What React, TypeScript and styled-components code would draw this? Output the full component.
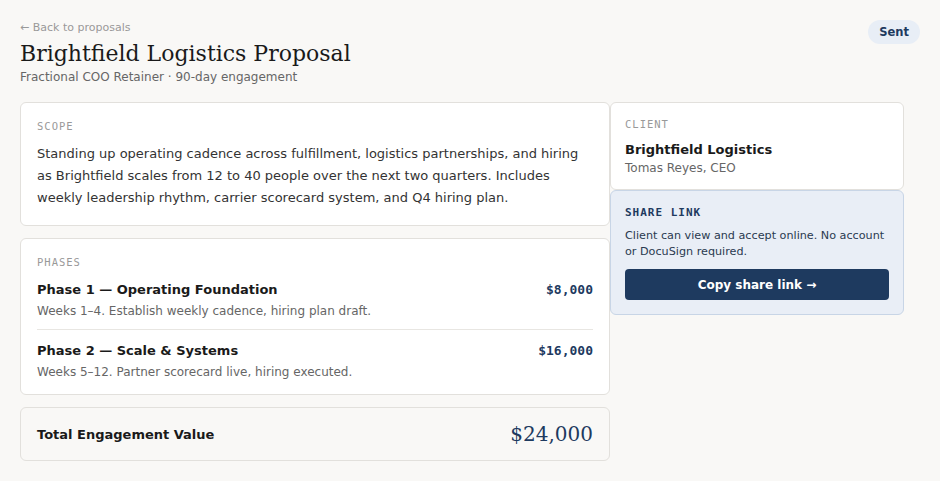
import styled, { createGlobalStyle } from "styled-components";

const GlobalStyle = createGlobalStyle`
  body {
    margin: 0;
    background: #f9f8f6;
    font-family: "DejaVu Sans", sans-serif;
    color: #1a1a1a;
  }
`;

const Page = styled.div`
  padding: 20px;
`;

const Header = styled.header`
  display: flex;
  justify-content: space-between;
  align-items: flex-start;
  margin-bottom: 16px;
`;

const BackLink = styled.a`
  display: block;
  margin-top: 1px;
  font-size: 11px;
  color: #999;
  line-height: 14px;
  text-decoration: none;
`;

const Title = styled.h1`
  margin: 4px 0 0;
  font-family: "DejaVu Serif", serif;
  font-weight: 400;
  font-size: 22px;
  line-height: 29px;
  color: #1a1a1a;
`;

const Subtitle = styled.div`
  font-size: 12px;
  line-height: 18px;
  color: #666;
`;

const Badge = styled.span`
  display: inline-block;
  padding: 5px 11px;
  border-radius: 12px;
  background: #e8eef6;
  color: #1e3a5f;
  font-size: 11.5px;
  font-weight: 700;
  line-height: 14px;
`;

const Grid = styled.div`
  display: grid;
  grid-template-columns: 590px 294px;
  align-items: start;
`;

const Column = styled.div<{ $gap: number }>`
  display: flex;
  flex-direction: column;
  gap: ${(p) => p.$gap}px;
`;

const Card = styled.section<{ $muted?: boolean; $pad?: string }>`
  background: ${(p) => (p.$muted ? "#f9f8f6" : "#fff")};
  border: 1px solid #e2e0dc;
  border-radius: 6px;
  padding: ${(p) => p.$pad ?? "16px"};
`;

const Label = styled.div<{ $mb?: number }>`
  font-family: "DejaVu Sans Mono", monospace;
  font-size: 10.5px;
  letter-spacing: 1px;
  color: #999;
  line-height: 14px;
  margin-bottom: ${(p) => p.$mb ?? 10}px;
`;

const Body = styled.p`
  margin: 0;
  font-size: 13px;
  line-height: 22px;
  color: #333;
`;

const Phase = styled.div<{ $first?: boolean }>`
  display: flex;
  justify-content: space-between;
  align-items: flex-start;
  padding: ${(p) => (p.$first ? "0 0 9px" : "11px 0 0")};
  border-bottom: ${(p) => (p.$first ? "1px solid #e8e6e2" : "none")};
`;

const PhaseTitle = styled.div`
  font-size: 13px;
  font-weight: 700;
  line-height: 20px;
  color: #1a1a1a;
`;

const PhaseDesc = styled.div`
  font-size: 12px;
  line-height: 18px;
  color: #666;
  margin-top: 2px;
`;

const Price = styled.div`
  font-family: "DejaVu Sans Mono", monospace;
  font-size: 13px;
  font-weight: 700;
  line-height: 20px;
  color: #1e3a5f;
`;

const TotalRow = styled.div`
  display: flex;
  justify-content: space-between;
  align-items: center;
`;

const TotalLabel = styled.div`
  font-size: 13px;
  font-weight: 700;
`;

const TotalValue = styled.div`
  font-family: "DejaVu Serif", serif;
  font-size: 20px;
  line-height: 20px;
  color: #1e3a5f;
`;

const ClientName = styled.div`
  font-size: 13px;
  font-weight: 700;
  line-height: 18px;
`;

const ClientRole = styled.div`
  font-size: 12px;
  line-height: 18px;
  color: #666;
`;

const ShareCard = styled.section`
  background: #e9eef6;
  border: 1px solid #c8d5e6;
  border-radius: 6px;
  padding: 15px 14px 14px;
`;

const ShareLabel = styled.div`
  font-family: "DejaVu Sans Mono", monospace;
  font-size: 11px;
  font-weight: 700;
  letter-spacing: 1px;
  color: #1e3a5f;
  line-height: 14px;
  margin-bottom: 8px;
`;

const ShareText = styled.p`
  margin: 0 0 9px;
  font-size: 11.2px;
  line-height: 16px;
  color: #2a3a50;
`;

const CopyButton = styled.button`
  display: block;
  width: 100%;
  height: 31px;
  border: none;
  border-radius: 4px;
  background: #1e3a5f;
  color: #fff;
  font-family: "DejaVu Sans", sans-serif;
  font-size: 12px;
  font-weight: 700;
  cursor: pointer;
`;

export default function App() {
  return (
    <>
      <GlobalStyle />
      <Page>
        <Header>
          <div>
            <BackLink href="#">← Back to proposals</BackLink>
            <Title>Brightfield Logistics Proposal</Title>
            <Subtitle>Fractional COO Retainer · 90-day engagement</Subtitle>
          </div>
          <Badge>Sent</Badge>
        </Header>
        <Grid>
          <Column $gap={12}>
            <Card>
              <Label>SCOPE</Label>
              <Body>
                Standing up operating cadence across fulfillment, logistics
                partnerships, and hiring as Brightfield scales from 12 to 40
                people over the next two quarters. Includes weekly leadership
                rhythm, carrier scorecard system, and Q4 hiring plan.
              </Body>
            </Card>
            <Card $pad="16px 16px 13px">
              <Label $mb={11}>PHASES</Label>
              <Phase $first>
                <div>
                  <PhaseTitle>Phase 1 — Operating Foundation</PhaseTitle>
                  <PhaseDesc>Weeks 1–4. Establish weekly cadence, hiring plan draft.</PhaseDesc>
                </div>
                <Price>$8,000</Price>
              </Phase>
              <Phase>
                <div>
                  <PhaseTitle>Phase 2 — Scale &amp; Systems</PhaseTitle>
                  <PhaseDesc>Weeks 5–12. Partner scorecard live, hiring executed.</PhaseDesc>
                </div>
                <Price>$16,000</Price>
              </Phase>
            </Card>
            <Card $muted>
              <TotalRow>
                <TotalLabel>Total Engagement Value</TotalLabel>
                <TotalValue>$24,000</TotalValue>
              </TotalRow>
            </Card>
          </Column>
          <Column $gap={0}>
            <Card $pad="14px 14px 12px">
              <Label $mb={10}>CLIENT</Label>
              <ClientName>Brightfield Logistics</ClientName>
              <ClientRole>Tomas Reyes, CEO</ClientRole>
            </Card>
            <ShareCard>
              <ShareLabel>SHARE LINK</ShareLabel>
              <ShareText>
                Client can view and accept online. No account or DocuSign
                required.
              </ShareText>
              <CopyButton>Copy share link →</CopyButton>
            </ShareCard>
          </Column>
        </Grid>
      </Page>
    </>
  );
}
